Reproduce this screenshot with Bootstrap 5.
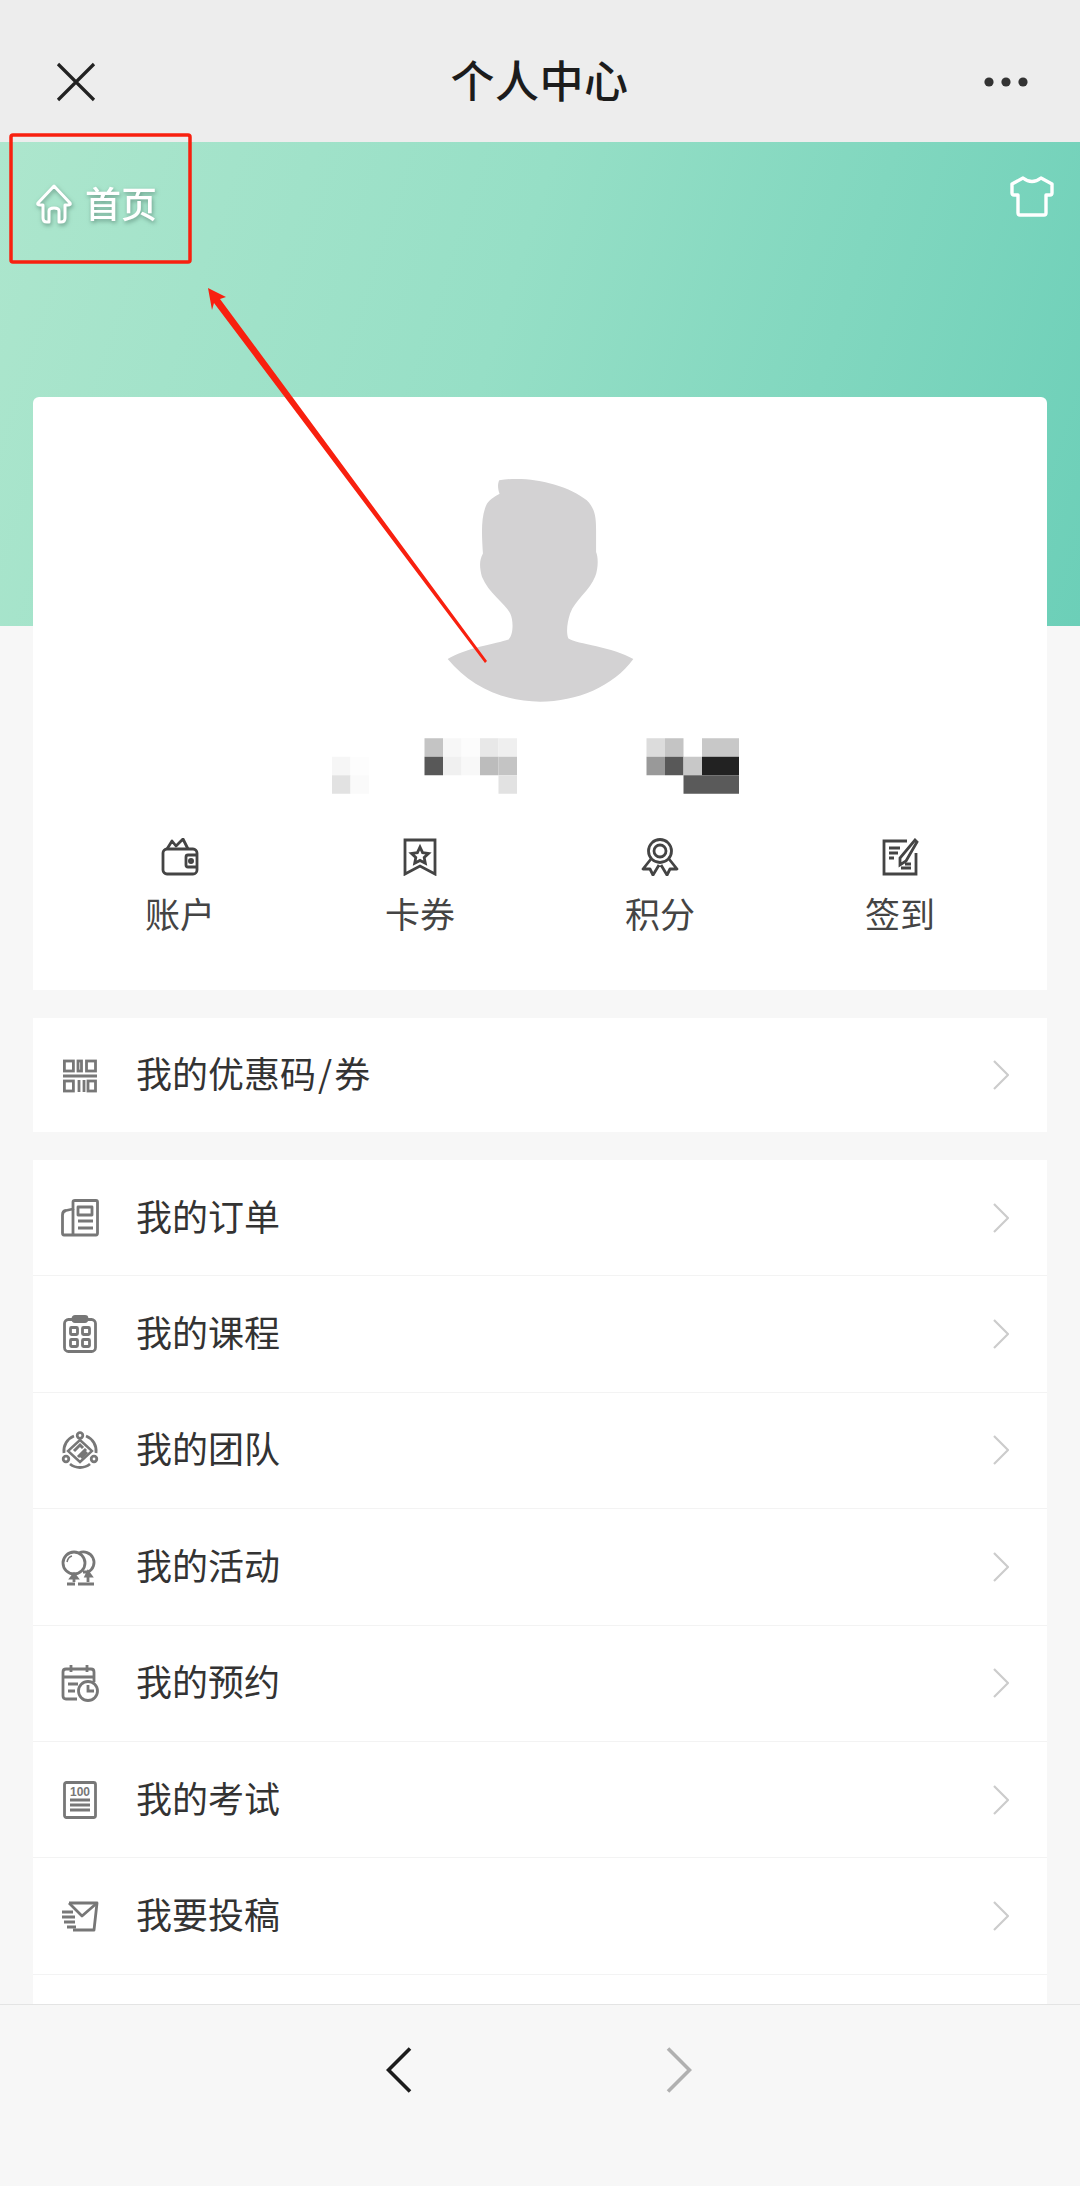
<!DOCTYPE html>
<html lang="zh-CN">
<head>
<meta charset="UTF-8" />
<title>个人中心</title>
<link rel="stylesheet" href="https://cdn.jsdelivr.net/npm/bootstrap@5.3.0/dist/css/bootstrap.min.css" />
<style>
  html, body { height: 2186px; overflow: hidden; }
  body { font-family: "Noto Sans CJK SC", "Liberation Sans", sans-serif; background: #f7f7f7; color: #333; }
  .page-shell { position: relative; width: 1080px; height: 2186px; }
  .top-bar { height: 142px; background: #ededed; padding: 22px 51px 0 56px; }
  .top-title { font-size: 44px; font-weight: 500; color: #1c1c1c; line-height: 1; letter-spacing: .5px; padding-bottom: 6px; }
  .scroll-area { height: 1862px; overflow: hidden; background: linear-gradient(108deg, #ade6cd 0%, #96dfc6 45%, #6ccfb8 100%) no-repeat; background-size: 100% 484px; padding: 0 33px; }
  .hero-head { height: 255px; padding-top: 33px; margin: 0 -7px 0 2px; }
  .home-link { margin-top: 8px; color: #fff; font-size: 36px; font-weight: 500; line-height: 39px; gap: 12px; filter: drop-shadow(1px 2px 2px rgba(60,100,85,.55)); }
  .home-text { padding-bottom: 3px; }
  .profile-box { background: #fff; border-radius: 6px 6px 0 0; height: 593px; padding-top: 80px; margin-bottom: 28px; }
  .name-blur { margin-top: 36px; margin-left: 299px; }
  .action-row { margin: 44px 27px 0; }
  .action-label { font-size: 35px; line-height: 50px; color: #444; margin-top: 12px; }
  .menu-box { --bs-list-group-border-color: #f3f3f3; --bs-list-group-border-radius: 0; margin-bottom: 28px; }
  .menu-row { height: 116.4px; padding: 0 38px 0 28px; gap: 37px; font-size: 36px; line-height: 1; color: #333; }
  .menu-row.one-off { height: 114px; }
  .menu-text { padding-bottom: 6px; }
  .slash-gap { margin: 0 2px; }
  .menu-ico { width: 38px; height: 38px; flex: none; fill: none; stroke: #777; stroke-width: 2.8; }
  .action-ico { width: 38px; height: 38px; display: block; margin: 0 auto; fill: none; stroke: #444; stroke-width: 2.8; }
  .bottom-bar { height: 182px; background: #f7f7f7; border-top: 1px solid #e4e4e4; }
  .bottom-nav { width: 306px; margin-left: 386px; margin-top: 42px; }
  .mark-layer { position: absolute; left: 0; top: 0; width: 1080px; height: 700px; pointer-events: none; }
</style>
</head>
<body>
<div class="page-shell d-flex flex-column">

  <!-- top bar -->
  <div class="top-bar d-flex align-items-center justify-content-between flex-shrink-0">
    <svg width="40" height="40" viewBox="0 0 40 40" fill="none" stroke="#222" stroke-width="3.2"><path d="M2 2 38 38M38 2 2 38"/></svg>
    <div class="top-title">个人中心</div>
    <svg width="46" height="12" viewBox="0 0 46 12" fill="#333"><circle cx="6" cy="6" r="4.6"/><circle cx="23" cy="6" r="4.6"/><circle cx="40" cy="6" r="4.6"/></svg>
  </div>

  <div class="scroll-area flex-grow-1">
    <div class="hero-head d-flex justify-content-between align-items-start">
      <div class="home-link d-flex align-items-center">
        <svg width="38" height="40" viewBox="0 0 38 40" fill="none" stroke="#fff" stroke-width="3" stroke-linejoin="round"><path d="M19 2 3 19Q2 21 5 21H8V34Q8 38 12 38H14V27Q14 24 19 24 24 24 24 27V38H26Q30 38 30 34V21H33Q36 21 35 19Z"/></svg>
        <span class="home-text">首页</span>
      </div>
      <svg width="44" height="42" viewBox="0 0 44 42" fill="none" stroke="#fff" stroke-width="3.4" stroke-linejoin="round"><path d="M13 3Q22 10 31 3L42 9V18Q42 20 40 20H36V38Q36 40 34 40H10Q8 40 8 38V20H4Q2 20 2 18V9Z"/></svg>
    </div>

    <!-- profile -->
    <div class="profile-box">
      <svg class="d-block mx-auto" width="187" height="225" viewBox="440 110 562 676" fill="#d3d2d3"><path d="M597 120C680 105 800 130 860 180 885 205 888 230 888 270V335C895 350 895 385 885 410 870 450 825 480 810 520 800 550 798 580 805 595 830 612 940 620 1000 657 940 740 830 785 720 785 610 785 510 740 442 657 490 625 590 610 625 598 640 585 640 540 630 520 615 490 565 460 545 410 537 380 537 360 548 340 545 290 540 230 560 190 570 175 590 165 598 160 592 145 592 130 597 120Z"/></svg>

      <svg class="name-blur d-block" width="407" height="56" viewBox="0 0 22 3">
        <rect x="5" y="0" width="1" height="1" fill="#c4c4c4"/><rect x="6" y="0" width="1" height="1" fill="#f7f7f7"/><rect x="7" y="0" width="1" height="1" fill="#fcfcfc"/><rect x="8" y="0" width="1" height="1" fill="#e8e8e8"/><rect x="9" y="0" width="1" height="1" fill="#efefef"/>
        <rect x="17" y="0" width="1" height="1" fill="#dcdcdc"/><rect x="18" y="0" width="1" height="1" fill="#c4c4c4"/><rect x="20" y="0" width="2" height="1" fill="#c8c8c8"/>
        <rect x="0" y="1" width="1" height="1" fill="#f6f6f6"/><rect x="1" y="1" width="1" height="1" fill="#fdfdfd"/><rect x="5" y="1" width="1" height="1" fill="#585858"/><rect x="6" y="1" width="1" height="1" fill="#f0f0f0"/><rect x="7" y="1" width="1" height="1" fill="#f8f8f8"/><rect x="8" y="1" width="1" height="1" fill="#bcbcbc"/><rect x="9" y="1" width="1" height="1" fill="#c4c4c4"/>
        <rect x="17" y="1" width="1" height="1" fill="#999"/><rect x="18" y="1" width="1" height="1" fill="#585858"/><rect x="19" y="1" width="1" height="1" fill="#c8c8c8"/><rect x="20" y="1" width="2" height="1" fill="#222"/>
        <rect x="0" y="2" width="1" height="1" fill="#e2e2e2"/><rect x="1" y="2" width="1" height="1" fill="#fafafa"/><rect x="9" y="2" width="1" height="1" fill="#e2e2e2"/><rect x="19" y="2" width="3" height="1" fill="#5a5a5a"/>
      </svg>

      <div class="action-row row g-0 text-center">
        <div class="col-3">
          <svg class="action-ico" viewBox="0 0 38 38" stroke-linejoin="round"><rect x="2" y="11" width="34" height="25" rx="4"/><path d="M6 11 11 3 15 8 22 1 27 11"/><path d="M36 17H27Q25 17 25 19V27Q25 29 27 29H36"/><circle cx="30" cy="23" r="1.6"/></svg>
          <div class="action-label">账户</div>
        </div>
        <div class="col-3">
          <svg class="action-ico" viewBox="0 0 38 38"><path d="M4 2H34V36L19 28 4 36Z"/><path d="M19 9 21.6 14.6 27.5 15.4 23.2 19.4 24.3 25.2 19 22.4 13.7 25.2 14.8 19.4 10.5 15.4 16.4 14.6Z"/></svg>
          <div class="action-label">卡券</div>
        </div>
        <div class="col-3">
          <svg class="action-ico" viewBox="0 0 38 38" stroke-linejoin="round"><circle cx="19" cy="13" r="11.5"/><circle cx="19" cy="13" r="6"/><path d="M10 21 2 31 9 31 12 37 18 27M28 21 36 31 29 31 26 37 20 27"/></svg>
          <div class="action-label">积分</div>
        </div>
        <div class="col-3">
          <svg class="action-ico" viewBox="0 0 38 38"><path d="M26 3H3V36H35V15"/><path d="M8 10H19M8 15H17M8 20H13M20 30H30M24 26H30"/><path d="M34 2 36 4 25 23 19 27 19 20Z"/></svg>
          <div class="action-label">签到</div>
        </div>
      </div>
    </div>

    <!-- coupon row -->
    <div class="menu-box list-group list-group-flush">
      <div class="menu-row one-off list-group-item d-flex align-items-center">
        <svg class="menu-ico" viewBox="0 0 38 38"><rect x="3.400" y="5" width="9" height="10"/><rect x="17" y="5" width="3.500" height="10"/><rect x="25.500" y="5" width="9" height="10"/><path d="M2 20H36" stroke-width="3"/><rect x="3.400" y="25" width="9" height="10"/><path d="M18 24V36M23 24V36"/><rect x="27" y="25" width="7.500" height="10"/></svg>
        <span class="menu-text flex-grow-1">我的优惠码<span class="slash-gap">/</span>券</span>
        <svg width="16" height="30" viewBox="0 0 16 30" fill="none" stroke="#ccc" stroke-width="2.2"><path d="M1 1 15 15 1 29"/></svg>
      </div>
    </div>

    <!-- main menu -->
    <div class="menu-box list-group list-group-flush">
      <div class="menu-row list-group-item d-flex align-items-center">
        <svg class="menu-ico" viewBox="0 0 38 38" stroke-linejoin="round"><path d="M12 36H3Q1.500 36 1.500 34V16Q1.500 12 5 11.500L12 10V3Q12 1.500 14 1.500H35Q36.500 1.500 36.500 3V34Q36.500 36 35 36Z"/><path d="M12 10V36"/><rect x="17" y="8" width="14" height="8"/><path d="M17 22H32M17 29H32"/></svg>
        <span class="menu-text flex-grow-1">我的订单</span>
        <svg width="16" height="30" viewBox="0 0 16 30" fill="none" stroke="#ccc" stroke-width="2.2"><path d="M1 1 15 15 1 29"/></svg>
      </div>
      <div class="menu-row list-group-item d-flex align-items-center">
        <svg class="menu-ico" viewBox="0 0 38 38"><rect x="3.500" y="4.500" width="31" height="32" rx="4"/><rect x="12" y="1.500" width="14" height="5" rx="2"/><rect x="9.500" y="12.500" width="7" height="7" rx="1"/><rect x="21.500" y="12.500" width="7" height="7" rx="1"/><rect x="9.500" y="24.500" width="7" height="7" rx="1"/><rect x="21.500" y="24.500" width="7" height="7" rx="1"/></svg>
        <span class="menu-text flex-grow-1">我的课程</span>
        <svg width="16" height="30" viewBox="0 0 16 30" fill="none" stroke="#ccc" stroke-width="2.2"><path d="M1 1 15 15 1 29"/></svg>
      </div>
      <div class="menu-row list-group-item d-flex align-items-center">
        <svg class="menu-ico" viewBox="0 0 38 38"><circle cx="19" cy="4.500" r="2.800"/><circle cx="5" cy="28" r="2.800"/><circle cx="33" cy="28" r="2.800"/><path d="M13 5A16 16 0 0 0 3 22M25 5A16 16 0 0 1 35 22M9 33A16 16 0 0 0 29 33"/><path d="M19 9 31 20 19 31 7 20Z" stroke-width="2.400"/><path d="M13 20 19 14 22 17M17 26 25 18M20 27 26 21" stroke-width="3"/></svg>
        <span class="menu-text flex-grow-1">我的团队</span>
        <svg width="16" height="30" viewBox="0 0 16 30" fill="none" stroke="#ccc" stroke-width="2.2"><path d="M1 1 15 15 1 29"/></svg>
      </div>
      <div class="menu-row list-group-item d-flex align-items-center">
        <svg class="menu-ico" viewBox="0 0 38 38"><circle cx="13" cy="15" r="11"/><path d="M18 5A10 10 0 1 1 27 24 L22 24"/><path d="M13 26 10 30H16ZM27 24 25 28H30ZM13 30V34M27 28V34"/><path d="M6 36H14M17 36H33"/><path d="M6 14Q7 9 11 8" stroke-width="1.500"/></svg>
        <span class="menu-text flex-grow-1">我的活动</span>
        <svg width="16" height="30" viewBox="0 0 16 30" fill="none" stroke="#ccc" stroke-width="2.2"><path d="M1 1 15 15 1 29"/></svg>
      </div>
      <div class="menu-row list-group-item d-flex align-items-center">
        <svg class="menu-ico" viewBox="0 0 38 38"><path d="M16 35H5Q2 35 2 32V8Q2 5 5 5H30Q33 5 33 8V18"/><path d="M10 1V8M26 1V8M2 13H33M7 20H17M7 27H14"/><circle cx="27" cy="27" r="9.500"/><path d="M27 21V27H33"/></svg>
        <span class="menu-text flex-grow-1">我的预约</span>
        <svg width="16" height="30" viewBox="0 0 16 30" fill="none" stroke="#ccc" stroke-width="2.2"><path d="M1 1 15 15 1 29"/></svg>
      </div>
      <div class="menu-row list-group-item d-flex align-items-center">
        <svg class="menu-ico" viewBox="0 0 38 38"><rect x="3.500" y="1.500" width="31" height="35" rx="2"/><text x="19" y="15" text-anchor="middle" font-family="'Liberation Sans', sans-serif" font-size="12" font-weight="700" fill="#777" stroke="none">100</text><path d="M9 19H29M9 24H29M9 29H29"/></svg>
        <span class="menu-text flex-grow-1">我的考试</span>
        <svg width="16" height="30" viewBox="0 0 16 30" fill="none" stroke="#ccc" stroke-width="2.2"><path d="M1 1 15 15 1 29"/></svg>
      </div>
      <div class="menu-row list-group-item d-flex align-items-center">
        <svg class="menu-ico" viewBox="0 0 38 38" stroke-linejoin="round"><path d="M8 6H36L33 33H12"/><path d="M8 6 21 19 36 6"/><path d="M1 15H12M1 20H14M3 25H14M6 30H15"/></svg>
        <span class="menu-text flex-grow-1">我要投稿</span>
        <svg width="16" height="30" viewBox="0 0 16 30" fill="none" stroke="#ccc" stroke-width="2.2"><path d="M1 1 15 15 1 29"/></svg>
      </div>
      <div class="menu-row list-group-item"></div>
    </div>
  </div>

  <!-- bottom nav -->
  <div class="bottom-bar flex-shrink-0">
    <div class="bottom-nav d-flex justify-content-between">
      <svg width="26" height="46" viewBox="0 0 26 46" fill="none" stroke="#1c1c1c" stroke-width="3.600"><path d="M24 1.500 2.500 23 24 44.500"/></svg>
      <svg width="26" height="46" viewBox="0 0 26 46" fill="none" stroke="#b0b0b0" stroke-width="3.600"><path d="M2 1.500 23.500 23 2 44.500"/></svg>
    </div>
  </div>

  <!-- annotation drawn over the screenshot -->
  <svg class="mark-layer" viewBox="0 0 1080 700">
    <rect x="11" y="135" width="179" height="127" rx="2" fill="none" stroke="#f8200f" stroke-width="3.500"/>
    <path d="M208 288 226 297 220 299 487 661 485 663 214 303 212 310Z" fill="#f8200f"/>
  </svg>
</div>
</body>
</html>
